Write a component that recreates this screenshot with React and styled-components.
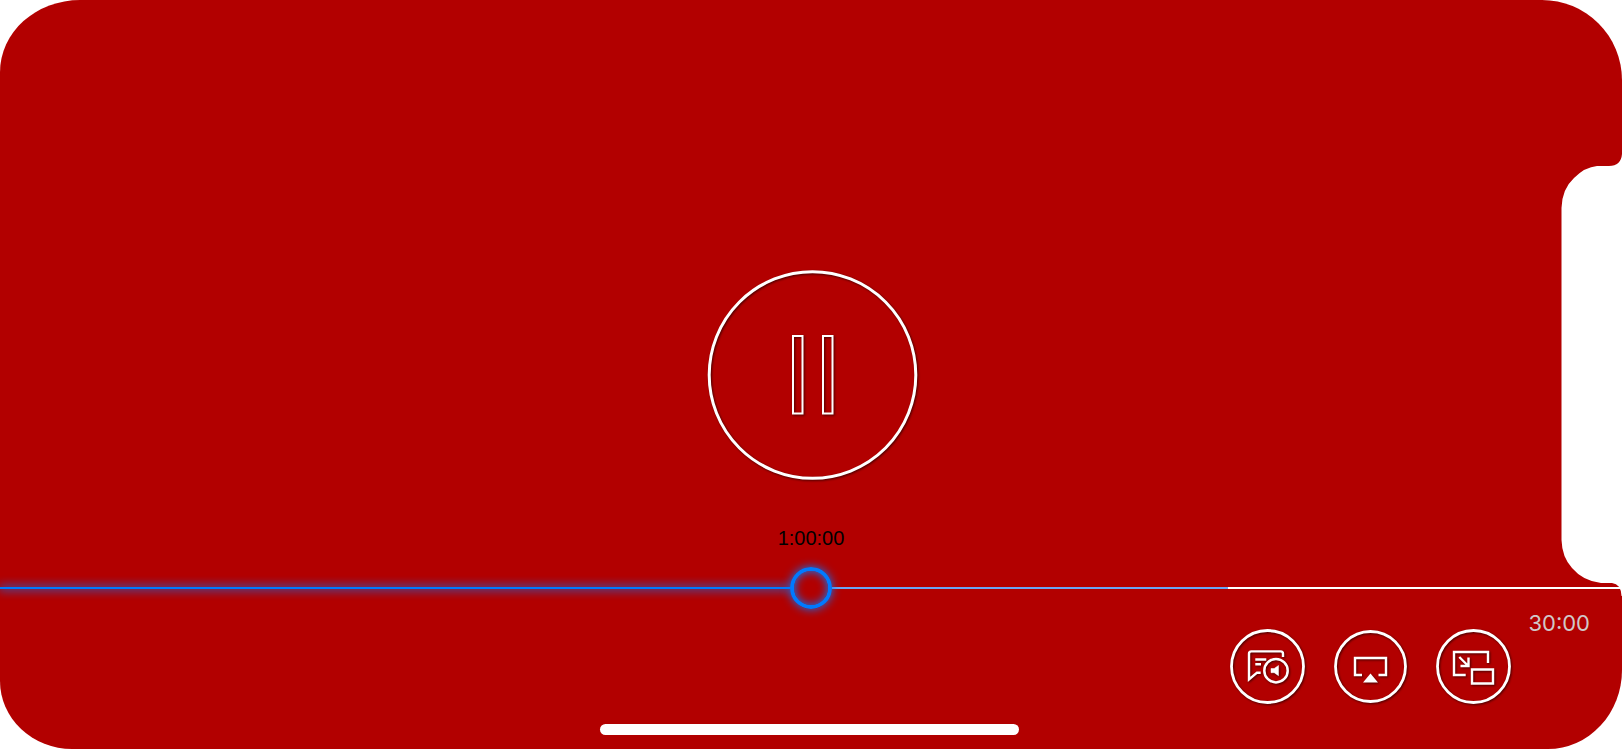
import React, { useState } from "react";
import styled, { createGlobalStyle } from "styled-components";

const RED = "#b20000";
const BLUE = "#007aff";
const THUMB = 42;

const GlobalStyle = createGlobalStyle`
  *, *::before, *::after { box-sizing: border-box; }
  body {
    margin: 0;
    background: #fff;
    font-family: "Liberation Sans", Arial, sans-serif;
  }
`;

const Screen = styled.main`
  position: relative;
  display: grid;
  grid-template-rows: 1fr auto 1fr;
  min-height: calc(100vh - 1px);
  margin: 0 2px 1px 0;
  overflow: hidden;
  background: ${RED};
  border-radius: 80px 80px 74px 72px / 72px 80px 79px 68px;
`;

const Notch = styled.svg`
  position: absolute;
  top: 150px;
  right: 0;
  width: 61px;
  height: 450px;
  fill: #fff;
`;

const RoundButton = styled.button`
  display: grid;
  place-items: center;
  width: ${(p) => p.$size}px;
  height: ${(p) => p.$size}px;
  padding: 0;
  border: 0;
  border-radius: 50%;
  background: none;
  color: #fff;
  cursor: pointer;
`;

const Drawing = styled.svg`
  display: block;
  width: 100%;
  height: 100%;
  overflow: visible;
  fill: none;
  stroke: currentColor;
  stroke-width: 2.4;
  filter: drop-shadow(1px 1px 1px rgba(0, 0, 0, 0.6));
`;

const Stage = styled.section`
  grid-row: 2;
  display: flex;
  justify-content: center;
  padding-left: 3px;
`;

const Controls = styled.section`
  grid-row: 3;
  display: flex;
  flex-direction: column;
  justify-content: flex-end;
`;

const Elapsed = styled.output`
  align-self: center;
  margin-bottom: 17px;
  font-size: 20px;
  line-height: 24px;
  color: #000;
`;

const Timeline = styled.div`
  display: grid;
  align-items: center;
  height: ${THUMB}px;

  > * { grid-area: 1 / 1; }
`;

const Track = styled.div`
  display: flex;
  height: 2px;
`;

const Played = styled.div`
  background: ${BLUE};
  box-shadow: 0 0 10px 1px ${BLUE};
`;

const Gap = styled.div`
  flex: none;
  width: ${THUMB}px;
`;

const Buffered = styled.div`
  background: #6ba4f4;
`;

const Remaining = styled.div`
  flex: 1;
  background: #fff;
`;

const Seek = styled.input`
  position: relative;
  appearance: none;
  width: 100%;
  height: ${THUMB}px;
  margin: 0;
  background: none;
  cursor: pointer;

  &::-webkit-slider-thumb {
    appearance: none;
    width: ${THUMB}px;
    height: ${THUMB}px;
    border: 4px solid ${BLUE};
    border-radius: 50%;
    background: transparent;
    box-shadow: 0 0 10px ${BLUE}, inset 0 0 10px ${BLUE};
  }
`;

const Actions = styled.div`
  display: flex;
  align-items: flex-end;
  justify-content: flex-end;
  padding-right: 32px;
`;

const ButtonGroup = styled.div`
  display: flex;
  align-items: center;
  gap: 29px;
  padding-top: 20px;
`;

const Left = styled.time`
  align-self: flex-start;
  margin-left: 17px;
  padding-top: 1px;
  font-family: Inter, sans-serif;
  font-size: 22px;
  line-height: 26px;
  color: #d0c8c8;
`;

const HomeIndicator = styled.div`
  align-self: center;
  width: 25.8%;
  height: 11px;
  margin: 20px 3px 14px 0;
  border-radius: 6px;
  background: #fff;
`;

function PauseIcon() {
  return (
    <Drawing viewBox="0 0 209 209" aria-hidden="true">
      <circle cx="104.5" cy="105" r="103.3" strokeWidth="3" />
      <path d="M85 66h9.500v77.500H85zM115 66h9.500v77.500h-9.500z" strokeWidth="2" />
    </Drawing>
  );
}

function SpeechIcon() {
  return (
    <Drawing viewBox="0 0 75 75" aria-hidden="true">
      <circle cx="37.5" cy="37.5" r="36" strokeWidth="2.8" />
      <path d="M53 28v-3.2q0-2.4-2.4-2.4H21.4Q19 22.400 19 24.800V50.500l8-6.800h3.700M25.300 30.500h11M25.300 35.300h5.700" />
      <circle cx="46" cy="41.700" r="11.700" strokeWidth="2.500" />
      <path d="M41 39.500h3.200l4.300-3v10.200l-4.300-3H41z" fill="currentColor" strokeWidth="0.500" />
    </Drawing>
  );
}

function AirPlayIcon() {
  return (
    <Drawing viewBox="0 0 73 73" aria-hidden="true">
      <circle cx="36.5" cy="36.500" r="35" strokeWidth="2.800" />
      <path d="M28 45h-7V28h31v17h-7.500" />
      <path d="M36.500 43.500l7.500 9h-15z" fill="currentColor" stroke="none" />
    </Drawing>
  );
}

function PipIcon() {
  return (
    <Drawing viewBox="0 0 75 75" aria-hidden="true">
      <circle cx="37.500" cy="37.500" r="36" strokeWidth="2.800" />
      <path d="M52 34V23H18v23h11.700M36 40.500h21v14H36zM23.300 28l9 9M32.500 28.500V37h-8" />
    </Drawing>
  );
}

export default function App() {
  const [position, setPosition] = useState(50);
  const buffered = 75.7;
  const played = `calc((100% - ${THUMB}px) * ${position / 100})`;
  const ahead = `max(0px, calc(${buffered}% - ${THUMB}px - (100% - ${THUMB}px) * ${position / 100}))`;

  return (
    <>
      <GlobalStyle />
      <Screen>
        <Stage>
          <RoundButton $size={209} type="button" aria-label="Pause">
            <PauseIcon />
          </RoundButton>
        </Stage>
        <Controls>
          <Elapsed htmlFor="seek">1:00:00</Elapsed>
          <Timeline>
            <Track>
              <Played style={{ width: played }} />
              <Gap />
              <Buffered style={{ width: ahead }} />
              <Remaining />
            </Track>
            <Seek
              id="seek"
              type="range"
              aria-label="Playback position"
              min="0"
              max="100"
              value={position}
              onChange={(e) => setPosition(Number(e.target.value))}
            />
          </Timeline>
          <Actions>
            <ButtonGroup>
              <RoundButton $size={75} type="button" aria-label="Audio and subtitles">
                <SpeechIcon />
              </RoundButton>
              <RoundButton $size={73} type="button" aria-label="AirPlay">
                <AirPlayIcon />
              </RoundButton>
              <RoundButton $size={75} type="button" aria-label="Picture in picture">
                <PipIcon />
              </RoundButton>
            </ButtonGroup>
            <Left>30:00</Left>
          </Actions>
          <HomeIndicator />
        </Controls>
        <Notch viewBox="0 0 61 450" aria-hidden="true">
          <path d="M61 0V4Q60 16 48 16H36Q24 17 13 28Q1 39 0.500 58V390Q1 407 11 418Q22 431 40 433H51Q60 434 60.500 446H61z" />
        </Notch>
      </Screen>
    </>
  );
}
